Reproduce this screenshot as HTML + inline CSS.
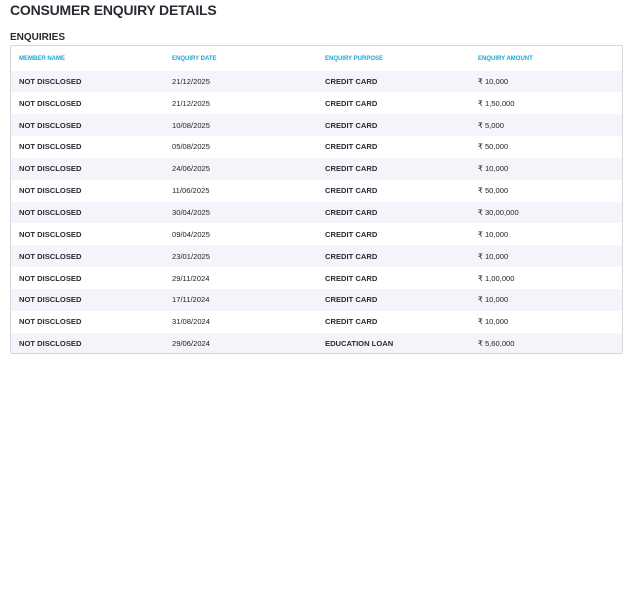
<!DOCTYPE html><html><head><style>
body{margin:0;background:#fff;font-family:"Liberation Sans",sans-serif;color:#2a2a33;width:632px;height:597px;overflow:hidden}
h1{position:absolute;left:10px;top:2px;margin:0;font-size:14px;font-weight:bold;letter-spacing:-0.2px}
h2{position:absolute;left:10px;top:32px;margin:0;font-size:10px;font-weight:bold}
.t{position:absolute;left:10px;top:45px;width:611px;height:307px;border:1px solid #d4d6dc;border-radius:2px;overflow:hidden}
.r{height:21.85px;display:flex;align-items:center;font-size:7.6px;font-weight:bold;position:relative}
.r.h{height:24.5px;color:#1aa8d2;font-size:6px;padding-top:1px;box-sizing:border-box}
.r:nth-child(even){background:#f4f5fa}
.r span{position:absolute}
.a{left:8px}.b{left:161px}.c{left:314px}.d{left:467px}
.r .b,.r .d{font-weight:normal;color:#222}
.r.h .b,.r.h .d{font-weight:bold;color:#1aa8d2}
</style></head><body>
<h1>CONSUMER ENQUIRY DETAILS</h1>
<h2>ENQUIRIES</h2>
<div class="t">
<div class="r h"><span class="a">MEMBER NAME</span><span class="b">ENQUIRY DATE</span><span class="c">ENQUIRY PURPOSE</span><span class="d">ENQUIRY AMOUNT</span></div>
<div class="r"><span class="a">NOT DISCLOSED</span><span class="b">21/12/2025</span><span class="c">CREDIT CARD</span><span class="d">₹ 10,000</span></div>
<div class="r"><span class="a">NOT DISCLOSED</span><span class="b">21/12/2025</span><span class="c">CREDIT CARD</span><span class="d">₹ 1,50,000</span></div>
<div class="r"><span class="a">NOT DISCLOSED</span><span class="b">10/08/2025</span><span class="c">CREDIT CARD</span><span class="d">₹ 5,000</span></div>
<div class="r"><span class="a">NOT DISCLOSED</span><span class="b">05/08/2025</span><span class="c">CREDIT CARD</span><span class="d">₹ 50,000</span></div>
<div class="r"><span class="a">NOT DISCLOSED</span><span class="b">24/06/2025</span><span class="c">CREDIT CARD</span><span class="d">₹ 10,000</span></div>
<div class="r"><span class="a">NOT DISCLOSED</span><span class="b">11/06/2025</span><span class="c">CREDIT CARD</span><span class="d">₹ 50,000</span></div>
<div class="r"><span class="a">NOT DISCLOSED</span><span class="b">30/04/2025</span><span class="c">CREDIT CARD</span><span class="d">₹ 30,00,000</span></div>
<div class="r"><span class="a">NOT DISCLOSED</span><span class="b">09/04/2025</span><span class="c">CREDIT CARD</span><span class="d">₹ 10,000</span></div>
<div class="r"><span class="a">NOT DISCLOSED</span><span class="b">23/01/2025</span><span class="c">CREDIT CARD</span><span class="d">₹ 10,000</span></div>
<div class="r"><span class="a">NOT DISCLOSED</span><span class="b">29/11/2024</span><span class="c">CREDIT CARD</span><span class="d">₹ 1,00,000</span></div>
<div class="r"><span class="a">NOT DISCLOSED</span><span class="b">17/11/2024</span><span class="c">CREDIT CARD</span><span class="d">₹ 10,000</span></div>
<div class="r"><span class="a">NOT DISCLOSED</span><span class="b">31/08/2024</span><span class="c">CREDIT CARD</span><span class="d">₹ 10,000</span></div>
<div class="r"><span class="a">NOT DISCLOSED</span><span class="b">29/06/2024</span><span class="c">EDUCATION LOAN</span><span class="d">₹ 5,60,000</span></div>
</div>
</body></html>
